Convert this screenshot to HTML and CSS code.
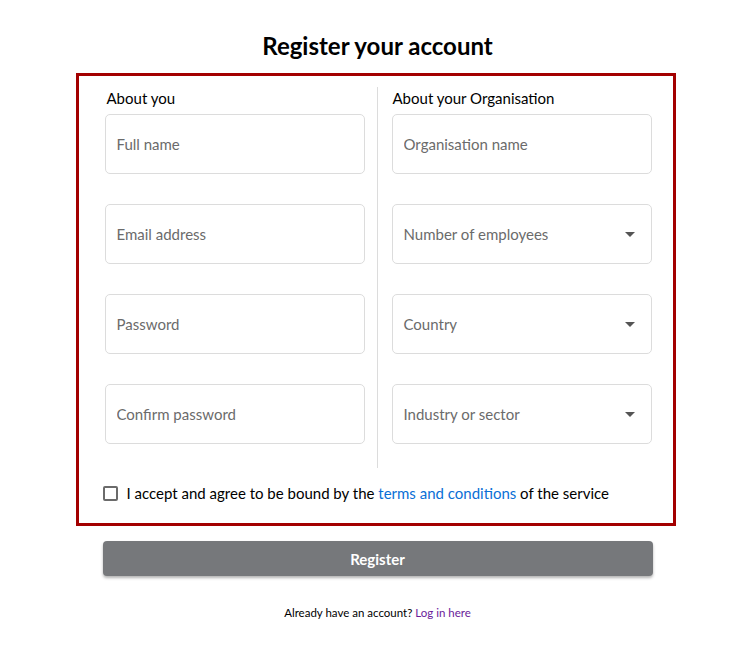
FILE: index.html
```html
<!DOCTYPE html>
<html>
<head>
<meta charset="utf-8">
<title>Register your account</title>
<link rel="stylesheet" href="styles.css">
</head>
<body>
<main class="page">
  <h1 class="title">Register your account</h1>
  <form class="card">
    <div class="columns">
      <section class="col col-left">
        <h2 class="col-label">About you</h2>
        <div class="fields">
          <input class="field" type="text" placeholder="Full name">
          <input class="field" type="email" placeholder="Email address">
          <input class="field" type="password" placeholder="Password">
          <input class="field" type="password" placeholder="Confirm password">
        </div>
      </section>
      <div class="divider"></div>
      <section class="col col-right">
        <h2 class="col-label">About your Organisation</h2>
        <div class="fields">
          <input class="field" type="text" placeholder="Organisation name">
          <div class="field select"><span>Number of employees</span><svg class="caret" width="10" height="5" viewBox="0 0 10 5"><path d="M0 0H10L5 5Z" fill="#555"/></svg></div>
          <div class="field select"><span>Country</span><svg class="caret" width="10" height="5" viewBox="0 0 10 5"><path d="M0 0H10L5 5Z" fill="#555"/></svg></div>
          <div class="field select"><span>Industry or sector</span><svg class="caret" width="10" height="5" viewBox="0 0 10 5"><path d="M0 0H10L5 5Z" fill="#555"/></svg></div>
        </div>
      </section>
    </div>
    <label class="agree">
      <span class="check"></span>
      <span>I accept and agree to be bound by the <a class="terms" href="#">terms and conditions</a> of the service</span>
    </label>
  </form>
  <button class="register" type="button">Register</button>
  <p class="login">Already have an account? <a class="login-link" href="#">Log in here</a></p>
</main>
</body>
</html>
```
FILE: styles.css
```css
html, body {
  margin: 0;
  padding: 0;
  background: #ffffff;
}
body {
  font-family: "Lato", "Open Sans", sans-serif;
  color: #111;
}
.page {
  width: 600px;
  margin: 0 auto;
  padding-top: 31px;
  display: flex;
  flex-direction: column;
  align-items: center;
}
.title {
  margin: 0 0 12px;
  font-size: 24px;
  font-weight: 700;
  line-height: 30px;
  color: #000;
}
.card {
  box-sizing: border-box;
  width: 600px;
  border: 3px solid #a30000;
  padding: 11px 21px 13px 26px;
  margin: 0 0 0 -2px;
  align-self: flex-start;
}
.columns {
  display: flex;
}
.col {
  width: 260px;
}
.divider {
  width: 1px;
  background: #dcdcdc;
  margin: 0 14px 0 12px;
  height: 381px;
}
.col-label {
  margin: 0 0 5px 2px;
  font-size: 15px;
  font-weight: 400;
  line-height: 22px;
  color: #000;
}
.col-right .col-label {
  margin-left: 1px;
}
.fields {
  display: flex;
  flex-direction: column;
  gap: 30px;
}
.field {
  box-sizing: border-box;
  width: 260px;
  height: 60px;
  border: 1px solid #dcdcdc;
  border-radius: 5px;
  padding: 0 12px 0 11px;
  font-family: inherit;
  font-size: 15px;
  color: #333;
  background: #fff;
  outline: none;
  margin: 0;
}
.field::placeholder {
  color: #6b6b6b;
}
.select {
  display: flex;
  align-items: center;
  justify-content: space-between;
  color: #6b6b6b;
  padding-right: 16px;
}
.caret {
  display: block;
}
.agree {
  display: flex;
  align-items: center;
  gap: 9px;
  margin: 8px 0 0 -2px;
  height: 34px;
  font-size: 15px;
  color: #000;
}
.check {
  box-sizing: border-box;
  width: 15px;
  height: 15px;
  border: 2px solid #6b6b6b;
  border-radius: 2px;
  flex: none;
}
.terms {
  color: #0a6fd6;
  text-decoration: none;
}
.register {
  margin-top: 15px;
  width: 550px;
  height: 35px;
  border: none;
  border-radius: 4px;
  background: #76787b;
  color: #fff;
  font-family: inherit;
  font-size: 15px;
  font-weight: 700;
  box-shadow: 0 2px 3px rgba(0, 0, 0, 0.3);
}
.login {
  margin: 30px 0 0;
  font-size: 11.5px;
  color: #000;
}
.login-link {
  color: #6a1b9a;
  text-decoration: none;
}
```
